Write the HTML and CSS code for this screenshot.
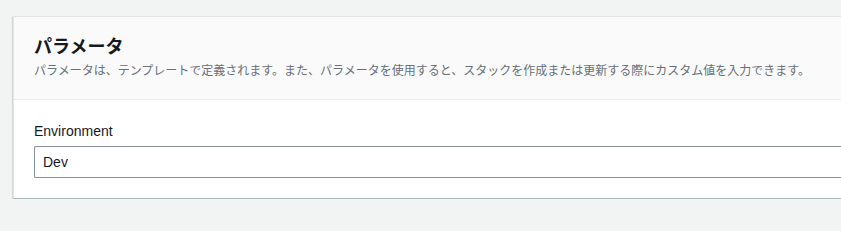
FILE: index.html
```html
<!DOCTYPE html>
<html lang="ja">
<head>
    <meta charset="UTF-8">
    <meta name="viewport" content="width=device-width, initial-scale=1.0">
    <title>パラメータ</title>
    <link rel="stylesheet" href="styles.css">
</head>
<body>
    <div class="page">
        <div class="panel">
            <div class="panel-header">
                <h2>パラメータ</h2>
                <p class="description">パラメータは、テンプレートで定義されます。また、パラメータを使用すると、スタックを作成または更新する際にカスタム値を入力できます。</p>
            </div>
            <div class="panel-body">
                <label class="field-label" for="environment">Environment</label>
                <input class="text-input" id="environment" type="text" value="Dev">
            </div>
        </div>
    </div>
</body>
</html>
```

FILE: styles.css
```css
body {
    margin: 0;
    background: #f2f3f3;
    font-family: "Liberation Sans", "Noto Sans CJK JP", sans-serif;
    color: #16191f;
}

.page {
    padding: 16px 0 0 13px;
}

.panel {
    background: #ffffff;
    border: 1px solid #e2e5e5;
    border-right: none;
    border-bottom-color: #aab7b8;
    box-shadow: 0 1px 1px 0 rgba(0, 28, 36, 0.2), -1px 1px 1px 0 rgba(0, 28, 36, 0.1);
}

.panel-header {
    background: #fafafa;
    border-bottom: 1px solid #eaeded;
    padding: 19px 20px 20px;
}

.panel-header h2 {
    margin: 0;
    font-size: 18px;
    font-weight: bold;
    line-height: 22px;
}

.description {
    margin: 5px 0 0;
    font-size: 12px;
    line-height: 16px;
    color: #687078;
}

.panel-body {
    padding: 20px 0 20px 20px;
}

.field-label {
    display: block;
    font-size: 14px;
    line-height: 22px;
    margin-bottom: 4px;
    color: #16191f;
}

.text-input {
    box-sizing: border-box;
    display: block;
    width: 100%;
    height: 32px;
    padding: 4px 8px;
    border: 1px solid #879596;
    border-right: none;
    border-radius: 2px 0 0 2px;
    font-family: "Liberation Sans", "Noto Sans CJK JP", sans-serif;
    font-size: 14px;
    color: #16191f;
    background: #ffffff;
}
```
